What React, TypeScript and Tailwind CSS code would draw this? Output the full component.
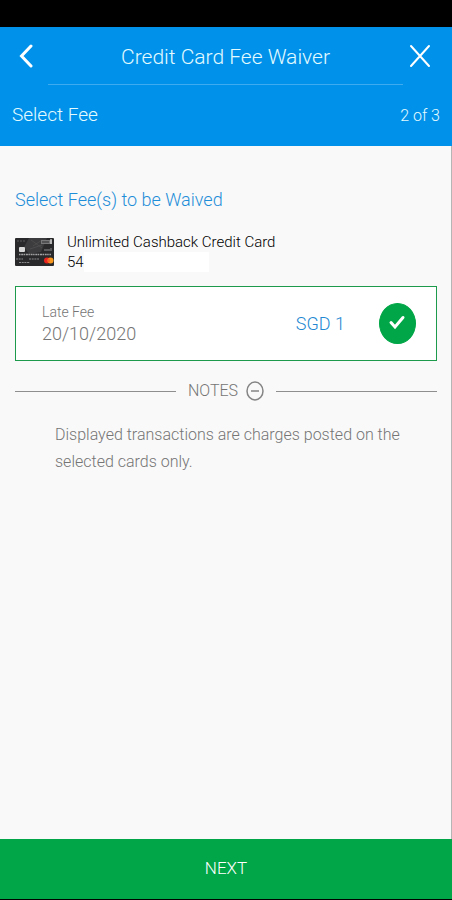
import { useState } from "react";

const FEES = [{ id: "late-fee", name: "Late Fee", date: "20/10/2020", amount: "SGD 1" }];

function CardArt() {
  return (
    <svg width="39" height="28" viewBox="0 0 39 28" role="img" aria-label="Cashback credit card" className="shrink-0">
      <rect width="39" height="28" rx="1" fill="#29282a" />
      <path d="M14 0h18l-6 14-12 2-5-7z" fill="#3c3b3d" />
      <path d="M16 2l11 8M18 8l9-6M15 11l12-4" stroke="#525153" strokeWidth="0.7" />
      <path d="M2 3h9" stroke="#5c5b5d" strokeWidth="1" strokeDasharray="2 1" />
      <rect x="26" y="2" width="11" height="4" fill="#777678" />
      <path d="M27 4h7" stroke="#2c2b2d" strokeWidth="1" />
      <path d="M36 1v5" stroke="#e2e2e2" strokeWidth="1.2" />
      <rect x="4" y="9" width="6" height="5" rx="1" fill="#d9d9d9" />
      <path d="M29 12h6M36 10v3" stroke="#8a898b" strokeWidth="1" />
      <path d="M4 16.500h32" stroke="#a3a2a4" strokeWidth="1.400" strokeDasharray="1.500 0.700 2 0.500" />
      <path d="M1 21h7M14 21h10M4 24.500h11" stroke="#8a898b" strokeWidth="1.200" strokeDasharray="2 0.700" />
      <circle cx="32" cy="22.500" r="3" fill="#e9231f" />
      <circle cx="35.500" cy="22.500" r="3" fill="#f8981d" />
      <path d="M33.750 20.100a3 3 0 0 1 0 4.800a3 3 0 0 1 0-4.800z" fill="#f9602a" />
    </svg>
  );
}

function Header() {
  return (
    <header className="bg-[#0091ea] text-[#e3fbff]">
      <div className="grid h-[58px] grid-cols-[48px_1fr_49px]">
        <button type="button" aria-label="Back" className="flex items-center justify-center pl-1">
          <svg width="14" height="24" viewBox="0 0 14 24" fill="none" stroke="#fff" strokeWidth="3" strokeLinecap="round">
            <path d="M12 2L2.500 12L12 22" strokeLinejoin="miter" />
          </svg>
        </button>
        <h1 className="flex items-center justify-center border-b border-[#3eabf0] pt-1 text-[21px]">
          Credit Card Fee Waiver
        </h1>
        <button type="button" aria-label="Close" className="flex items-center justify-center pr-4">
          <svg width="22" height="24" viewBox="0 0 22 24" fill="none" stroke="#fff" strokeWidth="2" strokeLinecap="round">
            <path d="M2 2L20 22M20 2L2 22" />
          </svg>
        </button>
      </div>
      <div className="flex h-[61px] items-center justify-between px-3">
        <p className="text-[19px]">Select Fee</p>
        <p className="text-base">2 of 3</p>
      </div>
    </header>
  );
}

function FeeRow({ fee }: { fee: (typeof FEES)[number] }) {
  const [checked, setChecked] = useState(true);
  return (
    <label
      htmlFor={fee.id}
      className="mt-[14px] flex h-[75px] items-center border border-[#1d9a4c] bg-white pr-5 pl-[26px] text-[#757575]"
    >
      <span className="flex flex-1 flex-col">
        <span className="text-sm leading-5">{fee.name}</span>
        <span className="text-lg leading-6">{fee.date}</span>
      </span>
      <span className="text-lg text-[#2288d2]">{fee.amount}</span>
      <span className="relative ml-[34px] h-[41px] w-[37px]">
        <input
          id={fee.id}
          type="checkbox"
          checked={checked}
          onChange={(e) => setChecked(e.target.checked)}
          className="block h-full w-full appearance-none rounded-[50%] border border-[#00a647] checked:bg-[#00a647]"
        />
        <svg
          viewBox="0 0 37 41"
          fill="none"
          stroke="#fff"
          strokeWidth="3"
          strokeLinecap="round"
          className="pointer-events-none absolute inset-0"
        >
          <path d="M12 19.500L16 24L24 14.500" />
        </svg>
      </span>
    </label>
  );
}

function Notes() {
  const [open, setOpen] = useState(true);
  return (
    <section>
      <div className="mt-4 flex items-center gap-3">
        <span className="h-px flex-1 bg-[#8f8f8f]" />
        <button
          type="button"
          aria-expanded={open}
          onClick={() => setOpen(!open)}
          className="flex items-center gap-2 text-base leading-7 text-[#757575]"
        >
          NOTES
          <svg width="18" height="20" viewBox="0 0 18 20" fill="none" stroke="#858585" strokeWidth="1.500">
            <ellipse cx="9" cy="10" rx="8" ry="9" />
            <path d={open ? "M5 10h8" : "M5 10h8M9 6v8"} />
          </svg>
        </button>
        <span className="h-px flex-1 bg-[#8f8f8f]" />
      </div>
      {open && (
        <p className="mt-4 pr-6 pl-10 text-base leading-[27px] text-[#757575]">
          Displayed transactions are charges posted on the selected cards only.
        </p>
      )}
    </section>
  );
}

export default function App() {
  return (
    <div className="flex min-h-screen flex-col border-b border-black bg-[#f9f9f9] font-['Roboto',sans-serif] font-light">
      <div className="h-[27px] bg-black" />
      <Header />
      <main className="flex-1 border-r border-[#b5b5b5] pt-10 pr-[14px] pl-[15px]">
        <h2 className="text-lg leading-7 text-[#1f8ed8]">Select Fee(s) to be Waived</h2>
        <div className="mt-[18px] flex items-center gap-[13px]">
          <CardArt />
          <div className="text-[15px] leading-5 text-black">
            <p>Unlimited Cashback Credit Card</p>
            <p className="flex">
              54
              <span className="h-5 w-[125px] bg-white" />
            </p>
          </div>
        </div>
        <FeeRow fee={FEES[0]} />
        <Notes />
      </main>
      <button type="button" className="h-[60px] bg-[#00a647] text-[17px] text-white">
        NEXT
      </button>
    </div>
  );
}
